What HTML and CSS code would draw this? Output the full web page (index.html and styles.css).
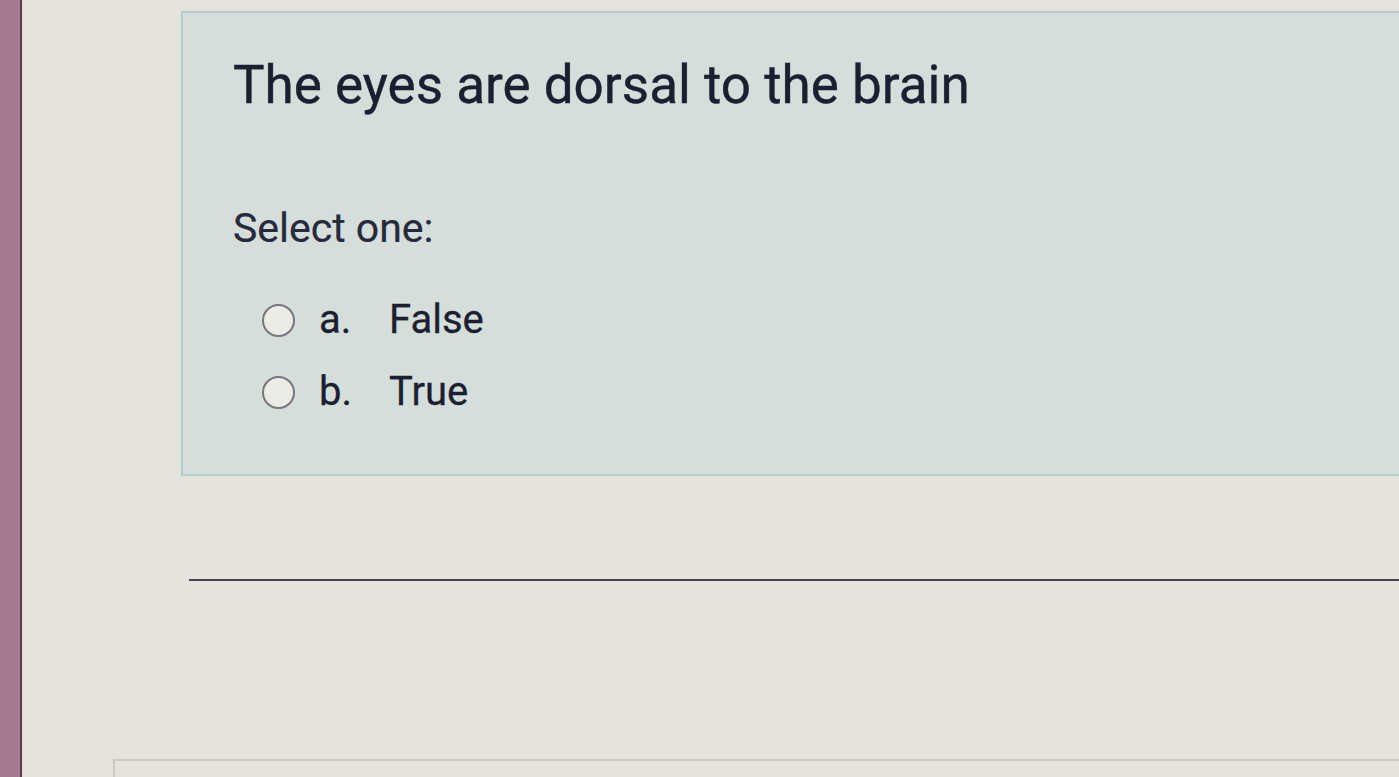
FILE: index.html
```html
<!DOCTYPE html>
<html>
<head>
<meta charset="utf-8">
<link rel="stylesheet" href="styles.css">
</head>
<body>
<div class="screen">
  <div class="edge"></div>
  <div class="page">
    <div class="question">
      <h1 class="qtext">The eyes are dorsal to the brain</h1>
      <div class="prompt">Select one:</div>
      <div class="answers">
        <label class="opt"><span class="radio"></span><span class="letter">a.</span><span class="label">False</span></label>
        <label class="opt"><span class="radio"></span><span class="letter">b.</span><span class="label">True</span></label>
      </div>
    </div>
    <div class="rule"></div>
    <div class="nextbox"></div>
  </div>
</div>
</body>
</html>
```
FILE: styles.css
```css
html, body {
  margin: 0;
  padding: 0;
  height: 100%;
  overflow: hidden;
}
body {
  background: #e5e3de;
  font-family: Roboto, "Noto Sans", sans-serif;
  color: #1b1f30;
}
.screen {
  display: flex;
  height: 777px;
}
.edge {
  width: 20px;
  flex: none;
  background: #a47b8f;
  border-right: 2px solid #5a3f4c;
  box-shadow: 2px 0 0 #f0d8e0;
}
.page {
  flex: 1;
  display: flex;
  flex-direction: column;
  padding-left: 159px;
  padding-top: 11px;
}
.question {
  background: #d5dedb;
  border: 2px solid #b3d0c8;
  border-right: none;
  height: 465px;
  padding: 0 0 0 50px;
  box-sizing: border-box;
}
.qtext {
  margin: 0;
  padding-top: 37px;
  font-size: 53px;
  font-weight: 400;
  line-height: 70px;
  -webkit-text-stroke: 0.4px #1b1f30;
}
.prompt {
  margin-top: 83px;
  font-size: 41px;
  line-height: 50px;
  color: #262a3a;
  -webkit-text-stroke: 0.2px #262a3a;
}
.answers {
  margin-top: 45px;
  display: flex;
  flex-direction: column;
  gap: 28px;
  padding-left: 29px;
}
.opt {
  display: flex;
  align-items: center;
  font-size: 40px;
  line-height: 44px;
  color: #1b1f30;
  -webkit-text-stroke: 0.3px #1b1f30;
}
.radio {
  width: 29px;
  height: 29px;
  border: 2.5px solid #77767a;
  border-radius: 50%;
  background: #ebebe8;
  margin-right: 24px;
  flex: none;
}
.letter {
  width: 70px;
}
.rule {
  margin-top: 103px;
  margin-left: 8px;
  height: 2px;
  background: #48444e;
}
.nextbox {
  margin-top: 178px;
  margin-left: -68px;
  flex: 1;
  border-top: 2px solid #cdc9c4;
  border-left: 2px solid #cdc9c4;
}
```
